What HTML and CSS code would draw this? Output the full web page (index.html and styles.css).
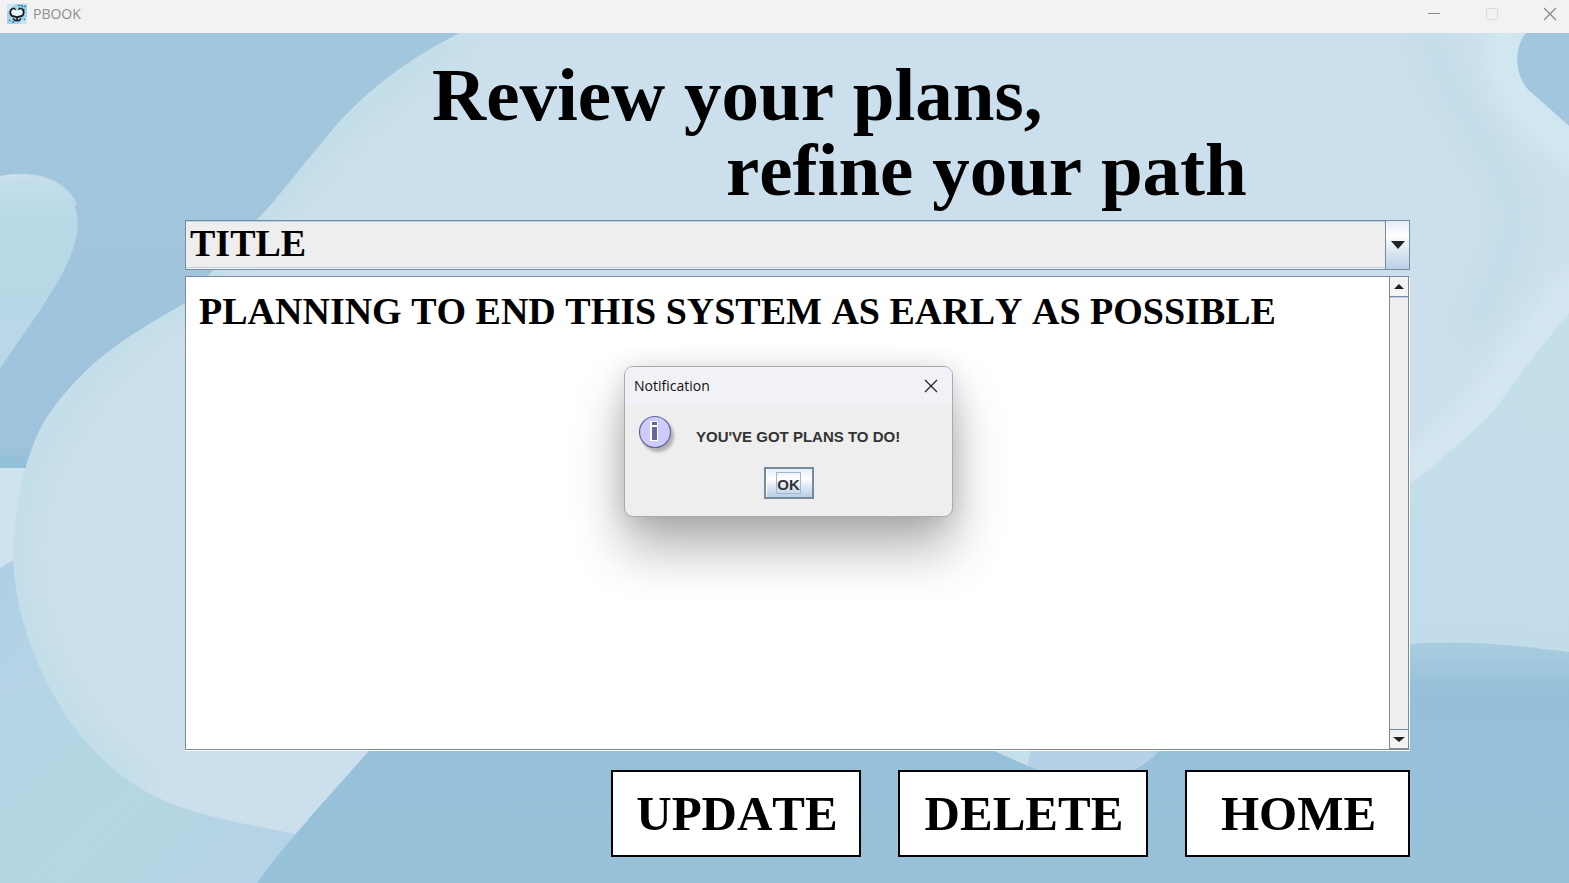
FILE: index.html
```html
<!DOCTYPE html>
<html lang="en">
<head>
<meta charset="utf-8">
<title>PBOOK</title>
<link rel="stylesheet" href="styles.css">
</head>
<body>
<div class="window">
  <header class="titlebar">
    <svg class="app-icon" viewBox="0 0 20 20" aria-hidden="true">
      <rect width="20" height="20" fill="#a5d3e8"/>
      <path d="M0 0h9L0 8zM11 20l9-7v7z" fill="#c9e6f2"/>
      <path d="M11 1l2 1M14 1l2 2M17 2l2 1M16 5l2 1M2 16l1 1M5 18l2 0M17 15l1 1" stroke="#2b7f9b" stroke-width="1.3"/>
      <path d="M3.500 9c0-3 1.500-4.500 4-4l2 2 2-2c3-.5 5 1.500 5 4.500 0 2.500-2 4-4.500 4h-4C5 13.500 3.500 12 3.500 9z" fill="#eef7fa"/>
      <path d="M5.500 4.500C3 6 2.500 9.500 4.500 11.500c1.500 1.500 4 .5 5.500 2 1.500-1.500 4-.5 5.500-2 2-2 1.500-5.500-1-7" fill="none" stroke="#10161c" stroke-width="1.800"/>
      <path d="M5.500 4.500h2l1 1.500M14.500 4.500h-2l-1 1.500M10 13v4M6 14.500l2 2h4l2-2" fill="none" stroke="#10161c" stroke-width="1.300"/>
    </svg>
    <span class="app-name">PBOOK</span>
    <div class="window-controls">
      <button class="window-button" type="button" aria-label="Minimize"><svg viewBox="0 0 14 14"><path d="M1 6.500h12" stroke="#8b8b8b"/></svg></button>
      <button class="window-button" type="button" aria-label="Maximize" disabled><svg viewBox="0 0 14 14"><path d="M1.500 1.500h11v11h-11z" stroke="#dcdcdc"/></svg></button>
      <button class="window-button" type="button" aria-label="Close"><svg viewBox="0 0 14 14"><path d="M1 1l12 12M13 1L1 13" stroke="#858585" stroke-width="1.200"/></svg></button>
    </div>
  </header>

  <main class="content">
    <svg class="backdrop" viewBox="0 33 1569 850" preserveAspectRatio="none" aria-hidden="true">
      <defs>
        <linearGradient id="sky" x1="0" y1="0" x2="0" y2="1"><stop offset="0" stop-color="#a2c7dd"/><stop offset=".4" stop-color="#9fc3dc"/><stop offset=".48" stop-color="#a0c3dd"/><stop offset=".515" stop-color="#8fbfd7"/></linearGradient>
        <linearGradient id="leaf" x1="0" y1="0" x2="0" y2="1"><stop offset="0" stop-color="#c6deec"/><stop offset=".25" stop-color="#b7d9e5"/><stop offset="1" stop-color="#b9d6e7"/></linearGradient>
        <linearGradient id="low" x1="0" y1="0" x2="1" y2="1"><stop offset="0" stop-color="#afcfe5"/><stop offset=".2" stop-color="#b5d3e6"/><stop offset=".45" stop-color="#b4d6e2"/><stop offset=".7" stop-color="#b5d5e3"/><stop offset="1" stop-color="#b6d2e8"/></linearGradient>
        <linearGradient id="paper" x1="0" y1="0" x2="0" y2="1"><stop offset="0" stop-color="#c4dfea"/><stop offset="1" stop-color="#c3dcea"/></linearGradient>
        <linearGradient id="sea" x1="0" y1="0" x2="0" y2="1"><stop offset="0" stop-color="#a9cde0"/><stop offset=".2" stop-color="#96c0d9"/><stop offset="1" stop-color="#98c1da"/></linearGradient>
        <filter id="soft" filterUnits="userSpaceOnUse" x="-100" y="-100" width="1800" height="1100"><feGaussianBlur stdDeviation="13"/></filter>
        <path id="blob" d="M460 33C410 58 362 92 325 139C292 178 275 202 255 222L208 276L185 303C130 335 85 360 45 420C25 455 13 510 13 555C15 640 65 740 135 785C175 812 235 822 295 834L370 750L1410 484C1425 474 1440 460 1455 447C1471 433 1490 417 1500 403C1510 389 1518 377 1527 365L1569 313V126L1532 93C1515 80 1512 50 1526 33Z"/>
        <clipPath id="blob-clip"><use href="#blob"/></clipPath>
      </defs>
      <rect y="33" width="1569" height="850" fill="url(#sky)"/>
      <path d="M0 176C35 170 78 182 78 225C76 268 28 325 0 369Z" fill="url(#leaf)"/>
      <path d="M0 178C30 170 64 178 76 205" fill="none" stroke="#d3e3f0" stroke-width="3" opacity=".6"/>
      <path d="M0 468H40V560L0 568Z" fill="#cfe3ef"/>
      <path d="M0 568L20 556L310 820V883H0Z" fill="url(#low)"/>
      <path d="M1400 300H1569V660H1400Z" fill="url(#paper)"/>
      <use href="#blob" fill="#cbdfec"/>
      <g clip-path="url(#blob-clip)">
        <path d="M460 33C362 92 275 202 208 276C110 340 13 440 13 555C15 640 60 725 140 792" fill="none" stroke="#bfdee8" stroke-width="22" filter="url(#soft)"/>
        <path d="M1425 20C1450 130 1530 170 1510 240C1500 280 1490 300 1470 330" fill="none" stroke="#c3dde9" stroke-width="26" filter="url(#soft)"/>
        <path d="M1508 0C1490 100 1530 105 1590 165" fill="none" stroke="#d3e9f2" stroke-width="34" filter="url(#soft)"/>
        <path d="M1395 480C1440 450 1480 415 1505 375L1580 275" fill="none" stroke="#d5e8f2" stroke-width="32" filter="url(#soft)"/>
      </g>
      <path d="M370 750L296 834Q273 860 257 883H1569V652C1500 643 1450 640 1400 645V740Z" fill="url(#sea)"/>
      <path d="M992 750L1028 766L1031 750Z" fill="#c5e0eb"/>
      <path d="M1031 750L1028 766L1045 773H1128Q1147 765 1160 750Z" fill="#b6d1e6"/>
    </svg>

    <h1 class="headline">
      <span class="headline-first">Review your plans,</span>
      <span class="headline-second">refine your path</span>
    </h1>

    <div class="combo">
      <select class="combo-select" aria-label="Plan">
        <option>TITLE</option>
      </select>
      <span class="combo-arrow" aria-hidden="true"><svg viewBox="0 0 14 8"><path d="M0 0h14L7 8z"/></svg></span>
    </div>

    <div class="editor">
      <textarea class="editor-text" aria-label="Plan text" spellcheck="false">PLANNING TO END THIS SYSTEM AS EARLY AS POSSIBLE</textarea>
      <div class="scrollbar">
        <button class="scroll-button scroll-up" type="button" aria-label="Scroll up"><svg viewBox="0 0 10 5"><path d="M0 5h10L5 0z"/></svg></button>
        <button class="scroll-button scroll-down" type="button" aria-label="Scroll down"><svg viewBox="0 0 12 5"><path d="M0 0h12L6 5z"/></svg></button>
      </div>
    </div>

    <div class="actions">
      <button class="action" type="button">UPDATE</button>
      <button class="action" type="button">DELETE</button>
      <button class="action action-home" type="button">HOME</button>
    </div>
  </main>

  <dialog class="notice" open aria-labelledby="notice-title">
    <header class="notice-bar">
      <h2 class="notice-title" id="notice-title">Notification</h2>
      <button class="notice-close" type="button" aria-label="Close notification"><svg viewBox="0 0 14 14"><path d="M1 1l12 12M13 1L1 13"/></svg></button>
    </header>
    <div class="notice-body">
      <svg class="notice-icon" viewBox="0 0 38 40" aria-hidden="true">
        <defs><filter id="shade" x="-20%" y="-20%" width="140%" height="140%"><feGaussianBlur stdDeviation="1.500"/></filter></defs>
        <circle cx="20" cy="21" r="16" fill="#999" opacity=".7" filter="url(#shade)"/>
        <circle cx="17" cy="17" r="15.500" fill="#ccccff" stroke="#666699" stroke-width="1.200"/>
        <path d="M12 6h8v5h-8zM12 11h8v15h-8z" fill="#fff"/>
        <path d="M14 7h5v3h-5zM14 12h5v13h-5z" fill="#666699"/>
      </svg>
      <p class="notice-message">YOU'VE GOT PLANS TO DO!</p>
    </div>
    <button class="notice-ok" type="button"><span class="notice-ok-label">OK</span></button>
  </dialog>
</div>
</body>
</html>
```
FILE: styles.css
```css
* {
  box-sizing: border-box;
}

body {
  margin: 0;
  color: #000;
  font-family: "Liberation Serif", "Times New Roman", serif;
  font-kerning: none;
}

button {
  margin: 0;
  padding: 0;
  border: 0;
  background: none;
  color: inherit;
  font: inherit;
  font-kerning: none;
}

svg {
  display: block;
}

.window {
  position: relative;
  display: flex;
  flex-direction: column;
  min-height: 100vh;
}

.titlebar {
  display: flex;
  align-items: center;
  height: 33px;
  padding: 0 0 5px 7px;
  background: #f2f2f2;
}

.app-icon {
  width: 20px;
  height: 20px;
}

.app-name {
  margin-left: 6px;
  color: #8f8f8f;
  font: 14px/20px "Open Sans", sans-serif;
}

.window-controls {
  display: flex;
  gap: 19px;
  margin-left: auto;
}

.window-button {
  display: grid;
  place-items: center;
  width: 39px;
  height: 28px;
}

.window-button svg {
  width: 14px;
  height: 14px;
  fill: none;
}

.content {
  position: relative;
  display: flex;
  flex: 1;
  flex-direction: column;
  padding: 24px 159px 26px 185px;
  isolation: isolate;
}

.backdrop {
  position: absolute;
  inset: 0;
  z-index: -1;
  width: 100%;
  height: 100%;
}

.headline {
  display: flex;
  flex-direction: column;
  margin: 0 0 13px;
  font-size: 75px;
  font-weight: bold;
  line-height: 75px;
}

.headline-first {
  padding-left: 247px;
}

.headline-second {
  padding-left: 541px;
}

.combo {
  position: relative;
  height: 50px;
  margin-bottom: 6px;
}

.combo-select {
  width: 100%;
  height: 100%;
  padding: 0 30px 4px 4px;
  border: 1px solid #7a8a99;
  border-radius: 0;
  background: #eee;
  box-shadow: inset 0 -1px #f8f8f8, inset 0 -2px #b8cfe5, inset 0 1px #b8cfe5;
  color: #000;
  font: bold 38px/44px "Liberation Serif", serif;
  font-kerning: none;
  appearance: none;
}

.combo-arrow {
  position: absolute;
  inset: 0 0 0 auto;
  display: grid;
  place-items: center;
  width: 25px;
  border: 1px solid #7a8a99;
  background: linear-gradient(#e2ecf5, #fff 30%, #dfeaf4 60%, #b8cfe5);
  pointer-events: none;
}

.combo-arrow svg {
  width: 14px;
  height: 8px;
  fill: #222;
}

.editor {
  display: flex;
  flex: 1;
  border: 1px solid #7a8a99;
  border-right-color: #fff;
  background: #fff;
  box-shadow: 0 1px #fff;
  margin-bottom: 20px;
}

.editor-text {
  flex: 1;
  min-width: 0;
  padding: 12px 13px;
  border: 0;
  outline: 0;
  background: #fff;
  color: #000;
  font: bold 38px/44px "Liberation Serif", serif;
  font-kerning: none;
  resize: none;
}

.scrollbar {
  display: flex;
  flex-direction: column;
  justify-content: space-between;
  width: 20px;
  border: solid #7a8a99;
  border-width: 0 1px;
  background: #eee;
}

.scroll-button {
  display: grid;
  place-items: center;
  height: 20px;
  border: 1px solid #7a8a99;
  border-width: 0 0 1px;
  background: #f3f3f3;
}

.scroll-up {
  box-shadow: 0 1px #b8cfe5;
}

.scroll-down {
  border-width: 1px 0;
}

.scroll-button svg {
  width: 12px;
  height: 5px;
  fill: #222;
}

.actions {
  display: flex;
  justify-content: flex-end;
  gap: 37px;
}

.action {
  width: 250px;
  height: 87px;
  padding-left: 2px;
  border: 2px solid #000;
  background: #fff;
  font-size: 49px;
  font-weight: bold;
  line-height: 58px;
}

.action-home {
  width: 225px;
}

.notice {
  position: absolute;
  top: 366px;
  left: 624px;
  display: flex;
  flex-direction: column;
  width: 329px;
  margin: 0;
  padding: 0 0 17px;
  overflow: hidden;
  border: 1px solid #aaa;
  border-radius: 9px;
  background: #eee;
  box-shadow: 0 32px 52px rgba(0, 0, 0, 0.3), 0 2px 26px rgba(0, 0, 0, 0.13);
  color: #333;
}

.notice-bar {
  display: flex;
  align-items: center;
  justify-content: space-between;
  height: 37px;
  padding: 0 14px 0 9px;
  background: #f1f1f8;
}

.notice-title {
  margin: 0;
  color: #111;
  font: 14px/20px "Open Sans", sans-serif;
}

.notice-close svg {
  width: 14px;
  height: 14px;
  fill: none;
  stroke: #222;
  stroke-width: 1.2;
}

.notice-body {
  display: flex;
  align-items: flex-start;
  gap: 20px;
  padding: 11px 13px 0;
}

.notice-icon {
  width: 38px;
  height: 40px;
}

.notice-message {
  margin: 12px 0 0;
  font: bold 15px/20px "Liberation Sans", Arial, sans-serif;
}

.notice-ok {
  display: grid;
  place-items: center;
  align-self: center;
  width: 50px;
  height: 32px;
  margin-top: 12px;
  border: 2px solid #7a8a99;
  background: linear-gradient(#e2ecf5, #fff 35%, #dfeaf4 60%, #b8cfe5);
  box-shadow: inset 1px 0 #fff;
}

.notice-ok-label {
  width: 25px;
  height: 22px;
  border: 1px solid #a3b8cc;
  font: bold 15px/24px "Liberation Sans", Arial, sans-serif;
}
```
